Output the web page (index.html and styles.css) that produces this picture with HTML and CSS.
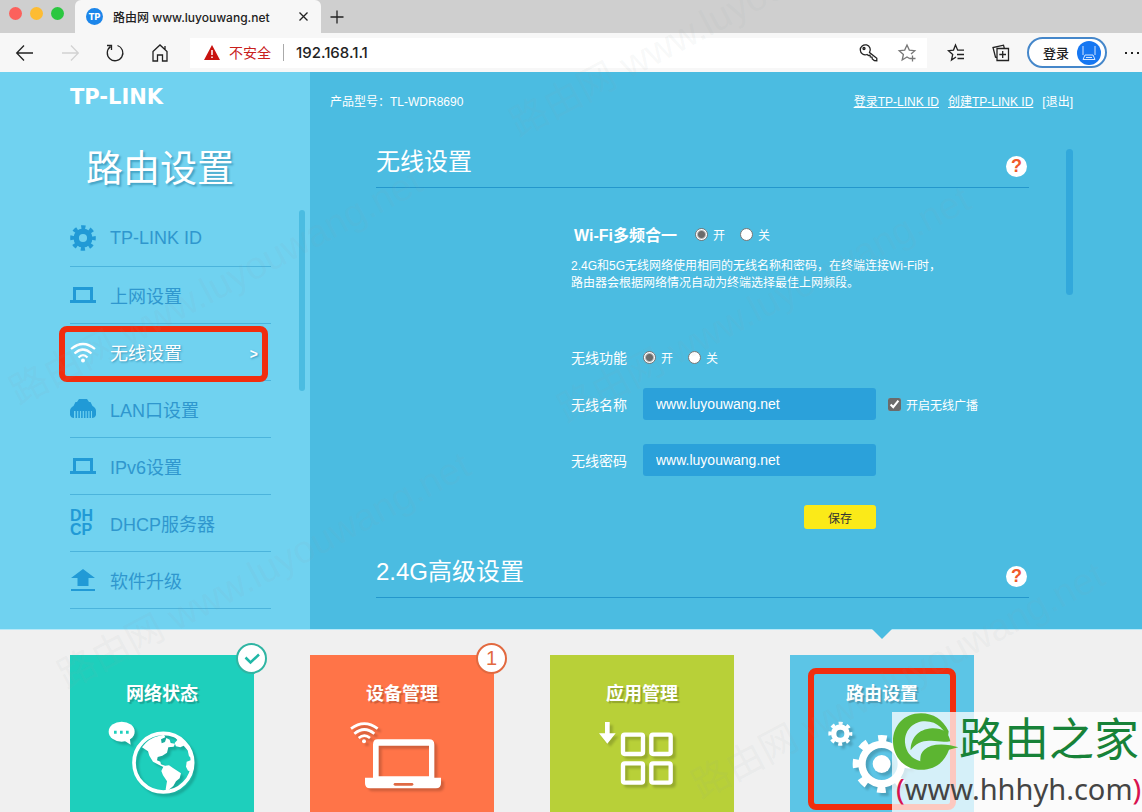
FILE: index.html
```html
<!DOCTYPE html>
<html lang="zh-CN">
<head>
  <meta charset="UTF-8">
  <meta name="viewport" content="width=device-width, initial-scale=1.0">
  <title>路由网 www.luyouwang.net</title>
  <link rel="stylesheet" href="styles.css">
</head>
<body>
  <!-- 浏览器 -->
  <header class="browser">
    <div class="tabbar">
      <div class="lights"><i class="red"></i><i class="yellow"></i><i class="green"></i></div>
      <div class="tab">
        <span class="favicon">TP</span>
        <span class="tab-title">路由网 www.luyouwang.net</span>
        <button class="icon-btn small" aria-label="关闭"><svg width="11" height="11" viewBox="0 0 11 11"><path d="M1.5 1.5l8 8M9.5 1.5l-8 8"/></svg></button>
      </div>
      <button class="icon-btn small" aria-label="新标签页"><svg width="14" height="14" viewBox="0 0 14 14"><path d="M7 0.5v13M0.5 7h13"/></svg></button>
    </div>
    <div class="toolbar">
      <button class="icon-btn" aria-label="后退"><svg width="20" height="20" viewBox="0 0 20 20"><path d="M18 10H2M9 2.5L1.7 10 9 17.5"/></svg></button>
      <button class="icon-btn off" aria-label="前进"><svg width="20" height="20" viewBox="0 0 20 20"><path d="M2 10h16M11 2.500L18.300 10 11 17.500"/></svg></button>
      <button class="icon-btn" aria-label="刷新"><svg width="20" height="20" viewBox="0 0 20 20"><path d="M12.500 2.500A7.800 7.800 0 1 1 5.500 3.600M2 2.500h4.500v4.500"/></svg></button>
      <button class="icon-btn" aria-label="主页"><svg width="20" height="20" viewBox="0 0 20 20"><path d="M3 8.500L10 2l7 6.500V18h-4.500v-6h-5v6H3zM15 3v3.500"/></svg></button>
      <div class="address">
        <svg class="warn" width="16" height="15" viewBox="0 0 16 15"><path fill="#c8130f" d="M8 0l8 15H0z"/><path stroke="#fff" stroke-width="1.500" d="M8 5v5M8 11.500v1.500"/></svg>
        <span class="unsafe">不安全</span>
        <span class="url">192.168.1.1</span>
        <button class="icon-btn" aria-label="密码"><svg width="20" height="20" viewBox="0 0 20 20"><path d="M10.500 9.500a5 5 0 1 0-2.500 2l1.500 1 1.500-.3.300 1.800 1.700.2.300 1.800 2 1.500 2.500.200v-2.500z"/><circle cx="5" cy="5.500" r="1"/></svg></button>
        <button class="icon-btn grey" aria-label="收藏"><svg width="20" height="20" viewBox="0 0 20 20"><path d="M12.500 15.500L10 14l-4.800 3 1.200-5.600L2.200 7.700l5.500-.6L10 2l2.300 5.100 5.500.6-3.800 3.400M15.500 12.500v6M12.500 15.500h6"/></svg></button>
      </div>
      <button class="icon-btn" aria-label="收藏夹"><svg width="20" height="20" viewBox="0 0 20 20"><path d="M10 14l-4.500 3 1.200-5.600L2.500 7.700l5-.6L9.500 2l2.200 5.200H18M11 11.500h7M11.500 15.500H18"/></svg></button>
      <button class="icon-btn" aria-label="集锦"><svg width="20" height="20" viewBox="0 0 20 20"><path d="M6 5.500h11.500V17.500H6zM11.700 8v7M8.300 11.500H15M6 14.500l-1.500-.3L2 4.500l10.500-2.300.8 3"/></svg></button>
      <button class="login">登录
        <svg width="24" height="24" viewBox="0 0 24 24"><circle cx="12" cy="12" r="12" fill="#1677f2"/><path fill="none" stroke="#d5e7ff" d="M6 5v9M18 5v9M8 14h8l2 4.500H6zM9 16.500h6"/></svg>
      </button>
      <button class="icon-btn more" aria-label="更多"><svg width="18" height="20" viewBox="0 0 18 20"><path d="M1 10h2M7 10h2M13 10h2"/></svg></button>
    </div>
  </header>

  <main class="router">
    <!-- 左侧菜单 -->
    <aside class="sidebar">
      <div class="logo">TP-LINK</div>
      <h1>路由设置</h1>
      <div class="menu-wrap">
        <ul class="menu">
          <li><a href="#id">
            <svg width="26" height="26" viewBox="0 0 26 26"><circle cx="13" cy="13" r="6.800" fill="none" stroke="#219ad6" stroke-width="5.500"/><circle cx="13" cy="13" r="10.800" fill="none" stroke="#219ad6" stroke-width="4" stroke-dasharray="4.200 4.282" stroke-dashoffset="2.100"/></svg>
            TP-LINK ID</a></li>
          <li><a href="#wan">
            <svg width="26" height="26" viewBox="0 0 26 26"><path fill="#219ad6" fill-rule="evenodd" d="M3 5h20v13h3v3H0v-3h3zM6 8v10h14V8z"/></svg>
            上网设置</a></li>
          <li class="active"><a href="#wifi">
            <svg width="26" height="26" viewBox="0 0 26 26"><path fill="none" stroke="#fff" stroke-width="2.200" d="M1 10q12-10 24 0M4.500 14.500q8.500-8 17 0M8.500 18.500q4.500-4.500 9 0"/><circle cx="13" cy="21.500" r="2" fill="#fff"/></svg>
            无线设置<span class="arrow">&gt;</span></a></li>
          <li><a href="#lan">
            <svg width="26" height="26" viewBox="0 0 26 26"><path fill="#219ad6" d="M9 3h8l2 3h1.500l2 4q3.500 2 3.500 5v4q-1 3-4 3V15H4v7q-3 0-4-3v-4q0-3 3.500-5l2-4H7z"/><path fill="none" stroke="#219ad6" stroke-width="8" stroke-dasharray="1.600 1.200" d="M5.500 18H21"/></svg>
            LAN口设置</a></li>
          <li><a href="#ipv6">
            <svg width="26" height="26" viewBox="0 0 26 26"><path fill="#219ad6" fill-rule="evenodd" d="M3 5h20v13h3v3H0v-3h3zM6 8v10h14V8z"/></svg>
            IPv6设置</a></li>
          <li><a href="#dhcp"><span class="dhcp">DH<br>CP</span>DHCP服务器</a></li>
          <li><a href="#upgrade">
            <svg width="26" height="26" viewBox="0 0 26 26"><path fill="#219ad6" d="M13 2l12 9h-6.500v8h-11v-8H1zM1 22h24v2H1z"/></svg>
            软件升级</a></li>
        </ul>
        <div class="menu-scroll"></div>
      </div>
    </aside>

    <!-- 设置内容 -->
    <div class="content">
      <div class="topline">
        <span>产品型号：TL-WDR8690</span>
        <nav class="account">
          <a href="#login">登录TP-LINK ID</a>
          <a href="#create">创建TP-LINK ID</a>
          <a class="quit" href="#quit">[退出]</a>
        </nav>
      </div>
      <div class="panel">
        <div class="sections">
          <section>
            <div class="section-head">
              <h2>无线设置</h2>
              <button class="help" aria-label="帮助">?</button>
            </div>
            <form class="form">
              <div class="row first">
                <span class="name big">Wi-Fi多频合一</span>
                <label><input type="radio" name="multi" checked>开</label>
                <label><input type="radio" name="multi">关</label>
              </div>
              <p class="note">2.4G和5G无线网络使用相同的无线名称和密码，在终端连接Wi-Fi时，<br>路由器会根据网络情况自动为终端选择最佳上网频段。</p>
              <div class="row switch">
                <span class="name">无线功能</span>
                <label><input type="radio" name="wlan" checked>开</label>
                <label><input type="radio" name="wlan">关</label>
              </div>
              <div class="row">
                <label class="name" for="ssid">无线名称</label>
                <input class="text" id="ssid" type="text" value="www.luyouwang.net">
                <label class="broadcast"><input type="checkbox" checked>开启无线广播</label>
              </div>
              <div class="row pwd">
                <label class="name" for="pwd">无线密码</label>
                <input class="text" id="pwd" type="text" value="www.luyouwang.net">
              </div>
              <button class="save" type="button">保存</button>
            </form>
          </section>
          <section>
            <div class="section-head">
              <h2>2.4G高级设置</h2>
              <button class="help" aria-label="帮助">?</button>
            </div>
          </section>
        </div>
        <div class="panel-scroll"></div>
      </div>
    </div>
  </main>

  <!-- 底部导航 -->
  <nav class="tiles">
    <a class="tile teal" href="#status">
      <span class="badge"><svg width="16" height="14" viewBox="0 0 16 14"><path fill="none" stroke="#20b7a6" stroke-width="2.500" d="M1.500 5.500l5 5L15 2.500"/></svg></span>
      <b>网络状态</b>
      <svg viewBox="60 264 552 282">
        <g fill="#fff">
          <ellipse cx="215" cy="305" rx="39" ry="30"/>
          <path d="M220 330l22 14-3-22z"/>
          <circle cx="340" cy="398" r="88" fill="none" stroke="#fff" stroke-width="11"/>
          <path d="M276 352q20-28 50-34l16-4 4 8-13 6 2 12 10-4 4-12 10 5 3 10 13 2-4 9-16 2-4 16-14 9-14 4-2 10 10 4 2 8 12 4-5 4-14-7-17-9-11-18-4-13z"/>
          <path d="M341 408l16-2 12 8 24 16-4 15-11 9-8 14-10 8-11 10-2-8 4-24-12-18-5-13z"/>
          <path d="M372 318q45 20 53 66l-8-5-4-18-12-14-10 5-13-3-4-10 8-9z"/>
          <path d="M424 390l-14 5-2 15 6 12 12 2z"/>
        </g>
        <path fill="#1ecfbc" d="M192 302h8v9h-8zM210 302h8v9h-8zM228 302h8v9h-8z"/>
      </svg>
    </a>
    <a class="tile orange" href="#devices">
      <span class="badge">1</span>
      <b>设备管理</b>
      <svg viewBox="27 264 552 282">
        <path fill="none" stroke="#fff" stroke-width="8" d="M150 296q40-30 80 0M160 311q30-25 60 0M173 324q17-14 34 0"/>
        <circle cx="189" cy="334" r="6" fill="#fff"/>
        <path fill="#fff" fill-rule="evenodd" d="M230 328h154q16 0 16 16v99h20v17q0 15-15 15H207q-15 0-15-15v-17h24v-99q0-16 14-16zM233 347v92h151v-92z"/>
        <path stroke="#e06a44" stroke-width="8" stroke-linecap="round" d="M282 463h51"/>
      </svg>
    </a>
    <a class="tile lime" href="#apps">
      <b>应用管理</b>
      <svg viewBox="27 264 552 282">
        <path fill="#fff" d="M192 276h14v34h18l-25 31-25-31h18z"/>
        <g fill="none" stroke="#fff" stroke-width="13">
          <rect x="246" y="314" width="60" height="58" rx="5"/>
          <rect x="331" y="314" width="58" height="58" rx="5"/>
          <rect x="246" y="400" width="60" height="58" rx="5"/>
          <rect x="331" y="400" width="58" height="58" rx="5"/>
        </g>
      </svg>
    </a>
    <a class="tile blue" href="#settings">
      <b>路由设置</b>
      <svg viewBox="27 264 552 282">
        <g fill="none" stroke="#fff">
          <circle cx="178" cy="311" r="20" stroke-width="16"/>
          <circle cx="178" cy="311" r="31" stroke-width="10" stroke-dasharray="12 12.347" stroke-dashoffset="6"/>
          <circle cx="302" cy="402" r="59" stroke-width="22"/>
          <circle cx="302" cy="402" r="77" stroke-width="20" stroke-dasharray="26 34.476" stroke-dashoffset="13"/>
        </g>
        <circle cx="302" cy="402" r="27" fill="#fff"/>
      </svg>
    </a>
  </nav>

  <!-- 水印 -->
  <div class="marks" aria-hidden="true">
    <span class="mark m1">路由网 www.luyouwang.net</span>
    <span class="mark m2">路由网 www.luyouwang.net</span>
    <span class="mark m3">路由网 www.luyouwang.net</span>
    <span class="mark m4">路由网 www.luyouwang.net</span>
    <span class="mark m5">路由网 www.luyouwang.net</span>
  </div>
  <div class="site">
    <div class="site-top">
      <svg width="66" height="57" viewBox="338 248 198 170">
        <path fill="#5cb531" d="M505 302Q478 248 422 248C370 248 338 286 338 332s34 86 84 86c45 0 72-26 84-60l28-8-24-6q-55-8-78 14-14 12-12 34-42-12-46-56c-2-38 26-64 60-64 40 0 60 28 68 55z"/>
        <path fill="#5cb531" d="M510 332q-8-40-54-39c-44 2-65 32-65 66 16-22 38-30 62-28 22 2 40 4 57 1z"/>
      </svg>
      <span class="site-name">路由之家</span>
    </div>
    <div class="site-url"><i>(</i>www.hhhyh.com<i>)</i></div>
  </div>
</body>
</html>
```
FILE: styles.css
```css
* {
  box-sizing: border-box;
}
body {
  margin: 0;
  height: 100vh;
  display: flex;
  flex-direction: column;
  overflow: hidden;
  position: relative;
  background: #f0f0f0;
  color: #fff;
  font-family: "Liberation Sans", "Noto Sans CJK SC", sans-serif;
  font-size: 12px;
}
a {
  color: inherit;
  text-decoration: none;
}
button {
  font-family: inherit;
  padding: 0;
  border: 0;
  background: none;
  color: inherit;
}

/* 浏览器 */
.browser {
  color: #222;
  font-family: Inter, "Noto Sans CJK SC", sans-serif;
}
.tabbar {
  display: flex;
  align-items: center;
  height: 33px;
  background: #cfcfcf;
}
.lights {
  display: flex;
  gap: 8px;
  width: 75px;
  padding: 0 0 6px 9px;
}
.lights i {
  width: 13px;
  height: 13px;
  border-radius: 50%;
}
.red { background: #fc615c; }
.yellow { background: #fdbc33; }
.green { background: #2bc740; }
.tab {
  display: flex;
  align-items: center;
  width: 246px;
  height: 33px;
  padding: 0 6px 0 11px;
  margin-right: 4px;
  background: #f7f7f7;
  border-radius: 6px 6px 0 0;
}
.favicon {
  width: 17px;
  height: 17px;
  border-radius: 50%;
  background: #1c86ea;
  color: #fff;
  font-size: 9px;
  font-weight: 800;
  line-height: 17px;
  text-align: center;
}
.tab-title {
  flex: 1;
  padding-left: 10px;
  font-size: 12px;
  font-weight: 500;
  white-space: nowrap;
}
.icon-btn {
  display: flex;
  align-items: center;
  justify-content: center;
  flex: none;
  width: 24px;
  height: 24px;
}
.icon-btn svg {
  fill: none;
  stroke: #222;
  stroke-width: 1.3;
}
.icon-btn.off svg { stroke: #d2d2d2; }
.icon-btn.grey svg { stroke: #777; }
.toolbar {
  display: flex;
  align-items: center;
  gap: 21px;
  height: 39px;
  padding-left: 13px;
  background: #f7f7f7;
}
.address {
  display: flex;
  align-items: center;
  flex: 1;
  height: 30px;
  padding: 0 8px 0 14px;
  margin: 0 -4px 0 -3px;
  background: #fff;
  font-size: 14px;
}
.unsafe {
  margin-left: 9px;
  padding-right: 12px;
  color: #c8201c;
  line-height: 17px;
  border-right: 1px solid #aaa;
}
.url {
  flex: 1;
  padding-left: 12px;
  font-size: 15px;
  font-weight: 500;
}
.address .icon-btn {
  margin-left: 14px;
}
.login {
  display: flex;
  align-items: center;
  gap: 8px;
  height: 31px;
  padding: 0 4px 0 14px;
  margin: 0 -4px 0 -7px;
  border: 2px solid #4587ca;
  border-radius: 16px;
  background: #fff;
  font-size: 13px;
  font-weight: 500;
  white-space: nowrap;
}
.icon-btn.more {
  width: 18px;
}
.icon-btn.more svg {
  stroke-width: 2;
}

/* 路由器页面 */
.router {
  display: flex;
  flex: 1;
  min-height: 0;
  border-bottom: 1px solid #b8e9f8;
}
.sidebar {
  display: flex;
  flex-direction: column;
  width: 310px;
  padding: 13px 5px 0 70px;
  background: #70d2f0;
}
.logo {
  font-family: "DejaVu Sans", sans-serif;
  font-size: 21px;
  font-weight: bold;
  line-height: 24px;
}
h1 {
  margin: 33px 0 0 16px;
  font-size: 37px;
  font-weight: normal;
  line-height: 56px;
  text-shadow: 2px 2px 2px rgba(0, 90, 130, .4);
}
.menu-wrap {
  display: flex;
  justify-content: space-between;
  flex: 1;
  min-height: 0;
  padding-top: 12px;
}
.menu {
  width: 201px;
  margin: 0;
  padding: 0;
  list-style: none;
}
.menu li {
  position: relative;
  height: 57px;
  border-bottom: 1px solid #4bb4dc;
}
.menu a {
  display: flex;
  align-items: center;
  gap: 14px;
  height: 56px;
  color: #2f97ce;
  font-size: 18px;
}
.menu .active a {
  color: #fff;
  text-shadow: 1px 1px 2px rgba(0, 90, 130, .5);
}
.active .arrow {
  margin: 4px 13px 0 auto;
  font-size: 14px;
  font-weight: bold;
}
.active::after,
.blue::before {
  content: "";
  position: absolute;
  border: 6px solid #f12d0e;
  border-radius: 8px;
}
.active::after {
  inset: 2px 3px -2px -11px;
}
.dhcp {
  width: 26px;
  color: #219ad6;
  font-size: 16px;
  font-weight: bold;
  line-height: 14px;
}
.menu-scroll {
  width: 6px;
  height: 181px;
  border-radius: 3px;
  background: #4bbce1;
}

.content {
  display: flex;
  flex-direction: column;
  flex: 1;
  min-width: 0;
  padding: 0 69px 0 20px;
  background: #4bbce1;
}
.topline {
  display: flex;
  justify-content: space-between;
  align-items: center;
  height: 56px;
}
.account {
  display: flex;
  gap: 9px;
}
.account a {
  text-decoration: underline;
}
.account .quit {
  text-decoration: none;
}
.panel {
  display: flex;
  flex: 1;
  min-height: 0;
  overflow: hidden;
  padding-left: 46px;
}
.sections {
  flex: 1;
}
.panel-scroll {
  width: 7px;
  height: 146px;
  margin: 21px 0 0 37px;
  border-radius: 4px;
  background: #32a8db;
}
.section-head {
  display: flex;
  align-items: flex-end;
  justify-content: space-between;
  padding: 16px 2px 7px 0;
  border-bottom: 1px solid #2497cc;
}
h2 {
  margin: 0;
  font-size: 24px;
  font-weight: normal;
  line-height: 36px;
}
.help {
  width: 21px;
  height: 21px;
  margin-bottom: 3px;
  border-radius: 50%;
  background: #fff;
  color: #f0592b;
  font-size: 18px;
  font-weight: bold;
  line-height: 21px;
}
.form {
  display: flex;
  flex-direction: column;
  margin: 34px 0 9px 195px;
}
.row {
  display: flex;
  align-items: center;
  height: 32px;
  white-space: nowrap;
}
.row.first {
  height: 24px;
}
.row.switch {
  margin: 49px 0 15px;
}
.row.pwd {
  margin-top: 24px;
}
.row label {
  display: flex;
  align-items: center;
  gap: 5px;
  margin-right: 15px;
}
.row .name {
  width: 72px;
  margin: 0;
  font-size: 14px;
}
.row .big {
  width: auto;
  margin: 0 18px 0 3px;
  font-size: 16px;
  font-weight: bold;
}
.note {
  margin: 12px 0 0;
  line-height: 17px;
  white-space: nowrap;
}
input[type="radio"] {
  appearance: none;
  width: 13px;
  height: 13px;
  margin: 0;
  border: 1px solid #777;
  border-radius: 50%;
  background: #fff;
}
input[type="radio"]:checked {
  background: radial-gradient(circle, #6b6b6b 3px, #fff 5px);
}
input[type="checkbox"] {
  width: 13px;
  height: 13px;
  margin: 0;
  accent-color: #6b6b6b;
}
.text {
  width: 233px;
  height: 32px;
  padding: 0 13px;
  border: 0;
  border-radius: 3px;
  background: #2ba1da;
  color: #fff;
  font-family: inherit;
  font-size: 14px;
}
.row .broadcast {
  margin-left: 12px;
}
.save {
  width: 72px;
  height: 24px;
  margin: 29px 0 0 233px;
  border-radius: 3px;
  background: #fbea18;
  color: #333;
  font-size: 12px;
}

/* 底部导航 */
.tiles {
  display: flex;
  gap: 56px;
  flex: none;
  height: 182px;
  padding: 25px 70px 0;
}
.tile {
  position: relative;
  width: 184px;
  height: 184px;
  padding-top: 25px;
  text-align: center;
}
.tile b {
  display: block;
  font-size: 18px;
  line-height: 28px;
  text-shadow: 2px 2px 1px rgba(0, 0, 0, .2);
}
.tile > svg {
  display: block;
  width: 184px;
  height: 94px;
  margin-top: 10px;
  filter: drop-shadow(3px 3px 1px rgba(0, 0, 0, .18));
}
.teal { background: #1ecfbc; }
.orange { background: #ff7448; }
.lime { background: #b8d038; }
.blue { background: #5cc5e6; }
.badge {
  position: absolute;
  top: -12px;
  right: -13px;
  display: flex;
  align-items: center;
  justify-content: center;
  width: 31px;
  height: 31px;
  border: 2px solid #2fb5a3;
  border-radius: 50%;
  background: #fff;
}
.orange .badge {
  border-color: #e2693f;
  color: #e2693f;
  font-size: 20px;
}
.blue::before {
  inset: 13px 18px 29px;
}
.blue::after {
  content: "";
  position: absolute;
  top: -26px;
  left: 82px;
  border: 10px solid transparent;
  border-top-color: #4bbce1;
  border-bottom: 0;
}

/* 水印 */
.marks {
  position: absolute;
  inset: 0;
  overflow: hidden;
  pointer-events: none;
}
.mark {
  position: absolute;
  color: rgba(150, 160, 165, .08);
  font-size: 38px;
  line-height: 40px;
  white-space: nowrap;
  transform: rotate(-28deg);
  transform-origin: 0 100%;
}
.m1 { left: 22px; top: 372px; }
.m2 { left: 70px; top: 656px; }
.m3 { left: 522px; top: 104px; }
.m4 { left: 570px; top: 390px; }
.m5 { left: 704px; top: 766px; }
.site {
  position: absolute;
  right: 0;
  bottom: 0;
  width: 250px;
  height: 100px;
  padding-left: 1px;
  background: rgba(255, 255, 255, .74);
  white-space: nowrap;
}
.site-top {
  display: flex;
  align-items: center;
  height: 58px;
}
.site-name {
  color: #178238;
  font-size: 45px;
  line-height: 58px;
}
.site-url {
  padding-left: 3px;
  color: #444;
  font-family: "Noto Sans", sans-serif;
  font-size: 29px;
  line-height: 38px;
}
.site-url i {
  color: #d8124f;
  font-style: normal;
}
```
